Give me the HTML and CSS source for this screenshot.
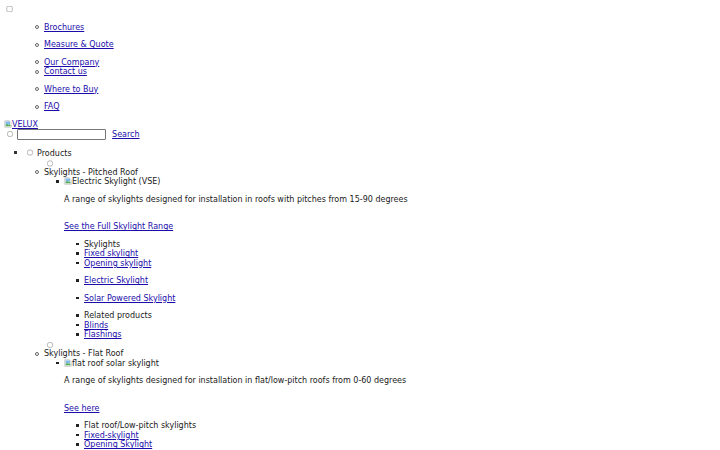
FILE: index.html
```html
<!DOCTYPE html>
<html lang="en">
<head>
  <meta charset="UTF-8">
  <meta name="viewport" content="width=device-width, initial-scale=1.0">
  <title>VELUX Skylights</title>
  <link rel="stylesheet" href="styles.css">
</head>
<body>
  <header>
    <input type="checkbox" class="menu-toggle" id="menu-toggle">

    <ul class="nav">
      <li>
        <ul class="nav-group">
          <li><a href="#">Brochures</a></li>
        </ul>
        <ul class="nav-group">
          <li><a href="#">Measure &amp; Quote</a></li>
        </ul>
        <ul class="nav-group">
          <li><a href="#">Our Company</a></li>
          <li><a href="#">Contact us</a></li>
        </ul>
        <ul class="nav-group">
          <li><a href="#">Where to Buy</a></li>
        </ul>
        <ul class="nav-group">
          <li><a href="#">FAQ</a></li>
        </ul>
      </li>
    </ul>

    <div class="logo">
      <a href="#"><span class="broken-img"><svg viewBox="0 0 16 16" width="16" height="16"><path d="M1.5 1.5h9l4 4v9h-13z" fill="#fff" stroke="#9a9a9a"/><rect x="3" y="3" width="9" height="6" fill="#7fb8e8"/><path d="M3 12l3-4 3 3 2-2 2 3z" fill="#3f9a3f"/><path d="M3 9h10v4H3z" fill="#58b058" opacity="0.6"/></svg></span>VELUX</a>
    </div>

    <form class="search-row">
      <input type="radio" name="search-open" class="search-toggle">
      <input type="text" name="q" class="search-input">
      <a href="#" class="search-link">Search</a>
    </form>
  </header>

  <ul class="products">
    <li>
      <input type="radio" name="menu" class="menu-radio"> Products
      <ul class="sub-menu">
        <li class="toggle-row"><input type="radio" name="sub" class="menu-radio"></li>
        <li>
          Skylights - Pitched Roof
          <ul class="range">
            <li>
              <span class="broken-img"><svg viewBox="0 0 16 16" width="16" height="16"><path d="M1.5 1.5h9l4 4v9h-13z" fill="#fff" stroke="#9a9a9a"/><rect x="3" y="3" width="9" height="6" fill="#7fb8e8"/><path d="M3 12l3-4 3 3 2-2 2 3z" fill="#3f9a3f"/><path d="M3 9h10v4H3z" fill="#58b058" opacity="0.6"/></svg></span>Electric Skylight (VSE)
              <p>A range of skylights designed for installation in roofs with pitches from 15-90 degrees</p>
              <p class="more"><a href="#">See the Full Skylight Range</a></p>
              <ul class="links">
                <li>Skylights</li>
                <li><a href="#">Fixed skylight</a></li>
                <li><a href="#">Opening skylight</a></li>
              </ul>
              <ul class="links">
                <li><a href="#">Electric Skylight</a></li>
              </ul>
              <ul class="links">
                <li><a href="#">Solar Powered Skylight</a></li>
              </ul>
              <ul class="links last">
                <li>Related products</li>
                <li><a href="#">Blinds</a></li>
                <li><a href="#">Flashings</a></li>
              </ul>
            </li>
          </ul>
        </li>
        <li class="toggle-row"><input type="radio" name="sub" class="menu-radio"></li>
        <li>
          Skylights - Flat Roof
          <ul class="range">
            <li>
              <span class="broken-img"><svg viewBox="0 0 16 16" width="16" height="16"><path d="M1.5 1.5h9l4 4v9h-13z" fill="#fff" stroke="#9a9a9a"/><rect x="3" y="3" width="9" height="6" fill="#7fb8e8"/><path d="M3 12l3-4 3 3 2-2 2 3z" fill="#3f9a3f"/><path d="M3 9h10v4H3z" fill="#58b058" opacity="0.6"/></svg></span>flat roof solar skylight
              <p>A range of skylights designed for installation in flat/low-pitch roofs from 0-60 degrees</p>
              <p class="more"><a href="#">See here</a></p>
              <ul class="links">
                <li>Flat roof/Low-pitch skylights</li>
                <li><a href="#">Fixed-skylight</a></li>
                <li><a href="#">Opening Skylight</a></li>
              </ul>
            </li>
          </ul>
        </li>
      </ul>
    </li>
  </ul>
</body>
</html>
```

FILE: styles.css
```css
html {
  zoom: 0.5;
}
body {
  margin: 8px;
  font-family: "DejaVu Sans", sans-serif;
  font-size: 16px;
  line-height: 19px;
  color: #1a1a1a;
  background-color: #fff;
}
a {
  color: #1a0dab;
}
ul {
  list-style: none;
}
li {
  position: relative;
}
.menu-toggle {
  margin: 3px 3px 3px 4px;
}
.nav {
  margin: 16px 0;
  padding-left: 40px;
}
.nav-group {
  margin: 16px 0;
  padding-left: 40px;
}
.broken-img svg {
  vertical-align: -2px;
}
.search-row {
  margin: 0;
}
.search-input {
  width: 178px;
  height: 21px;
  box-sizing: border-box;
  margin: 0;
  border: 1px solid #777;
  border-radius: 2px;
}
.search-link {
  margin-left: 7px;
}
.menu-radio {
  margin: 3px 3px 0 5px;
}
.products {
  margin: 16px 0;
  padding-left: 40px;
}
.sub-menu {
  margin: 0;
  padding-left: 40px;
}
.toggle-row {
  height: 19px;
  line-height: 16px;
}
.toggle-row .menu-radio {
  vertical-align: top;
  margin-top: 4px;
}
.toggle-row::before {
  display: none;
}
.range {
  margin: 0;
  padding-left: 40px;
}
.range p {
  margin: 16px 0;
}
.range .more {
  margin-top: 36px;
}
.links {
  margin: 16px 0;
  padding-left: 40px;
}
.links.last {
  margin-bottom: 0;
}

/* list markers: disc, circle, then square for deeper levels */
.products > li::before,
.nav-group li::before,
.sub-menu > li::before,
.range > li::before,
.links li::before {
  content: "";
  position: absolute;
  box-sizing: border-box;
}
.products > li::before {
  left: -20px;
  top: 7px;
  width: 5px;
  height: 5px;
  background-color: #333;
}
.nav-group li::before,
.sub-menu > li::before {
  left: -18px;
  top: 5px;
  width: 8px;
  height: 8px;
  border: 1.5px solid #666;
  border-radius: 50%;
}
.range > li::before,
.links li::before {
  left: -16px;
  top: 6px;
  width: 5px;
  height: 5px;
  background-color: #222;
}
```
